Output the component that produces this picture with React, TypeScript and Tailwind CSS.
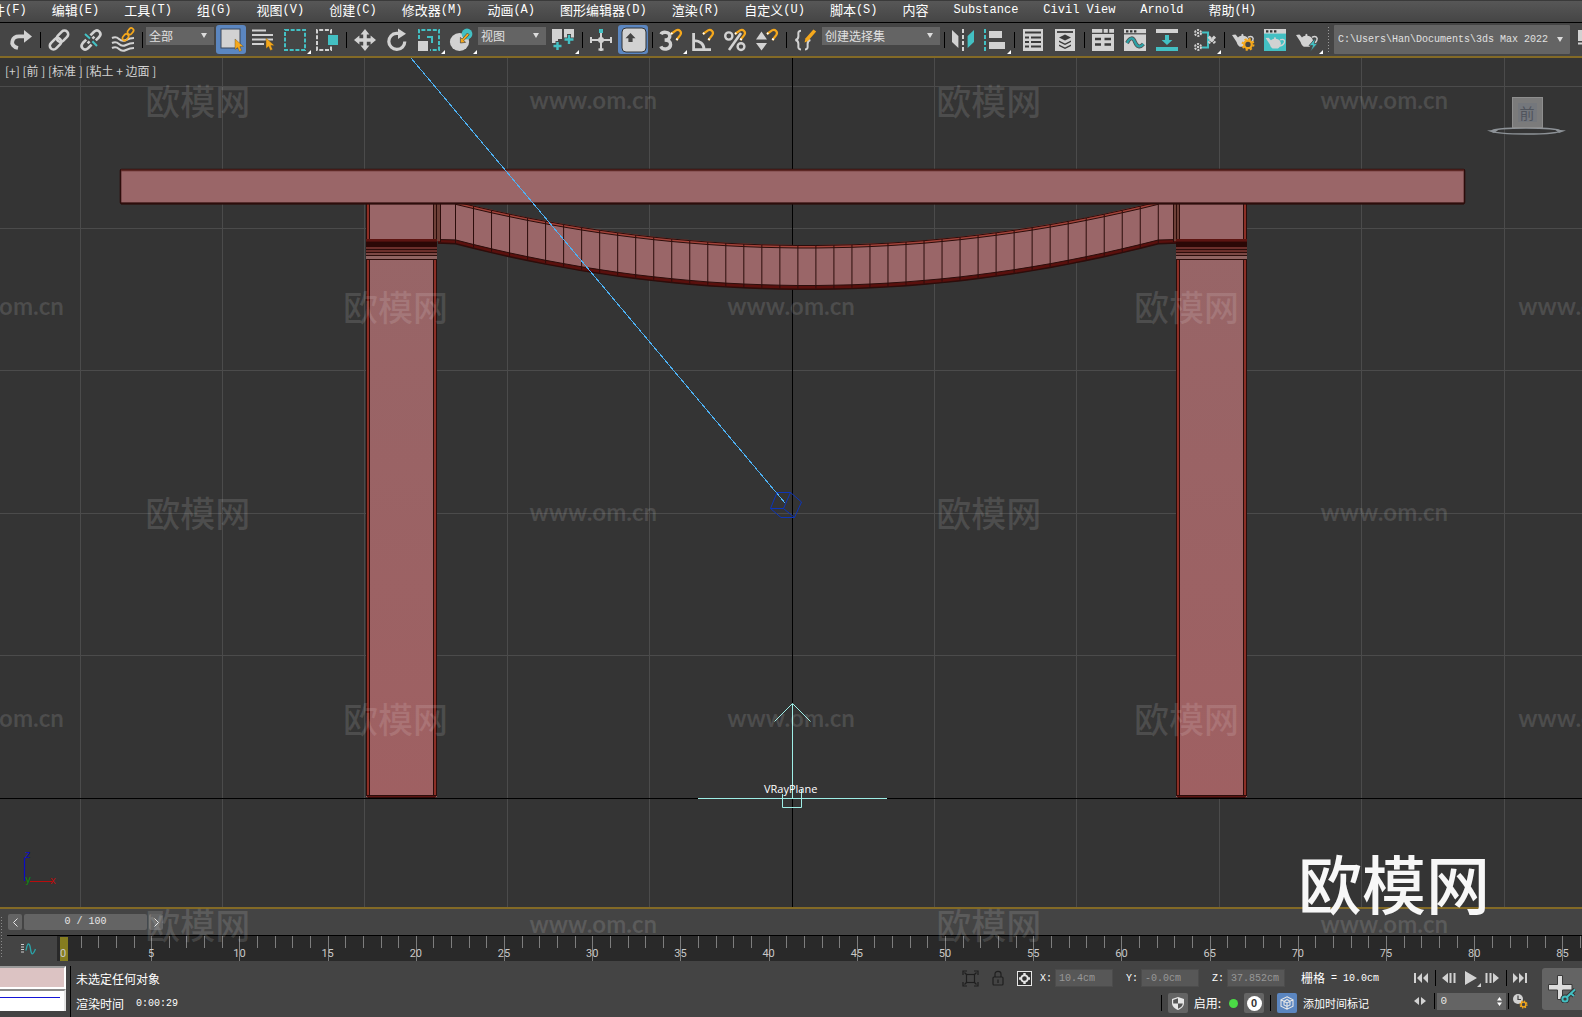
import type { ReactNode } from "react";

const LIGHT = "#d2d2d2";
const TEAL = "#43c0c3";
const AMBER = "#f5a81c";

const menus = [
  { label: "文件", latin: "(F)" },
  { label: "编辑", latin: "(E)" },
  { label: "工具", latin: "(T)" },
  { label: "组", latin: "(G)" },
  { label: "视图", latin: "(V)" },
  { label: "创建", latin: "(C)" },
  { label: "修改器", latin: "(M)" },
  { label: "动画", latin: "(A)" },
  { label: "图形编辑器", latin: "(D)" },
  { label: "渲染", latin: "(R)" },
  { label: "自定义", latin: "(U)" },
  { label: "脚本", latin: "(S)" },
  { label: "内容", latin: "" },
  { label: "", latin: "Substance" },
  { label: "", latin: "Civil View" },
  { label: "", latin: "Arnold" },
  { label: "帮助", latin: "(H)" },
];

function MenuBar() {
  return (
    <nav className="flex h-[22px] shrink-0 items-center gap-[25px] overflow-hidden border-t border-[#3a3a3a] bg-linear-to-b from-[#575757] to-[#454545] pb-[3px] whitespace-nowrap">
      {menus.map((menu, i) => (
        <a
          key={menu.label + menu.latin}
          href="#"
          className={`flex shrink-0 items-center text-[13px] leading-[18px] text-white ${i === 0 ? "-ml-[21px]" : ""}`}
        >
          {menu.label}
          <span className="font-['Liberation_Mono',monospace] text-[12px]">
            {menu.latin}
          </span>
        </a>
      ))}
    </nav>
  );
}

function Icon({ children }: { children: ReactNode }) {
  return (
    <svg
      viewBox="0 0 22 22"
      className="h-[22px] w-[22px] overflow-visible"
      fill="none"
      aria-hidden="true"
    >
      {children}
    </svg>
  );
}

type ToolProps = {
  name: string;
  active?: boolean;
  flyout?: boolean;
  children: ReactNode;
};

function Tool({ name, active, flyout, children }: ToolProps) {
  return (
    <button
      type="button"
      aria-label={name}
      title={name}
      className="relative flex h-[33px] w-8 shrink-0 items-center justify-center"
    >
      <span
        className={`flex h-[29px] w-[30px] items-center justify-center rounded-[3px] ${active ? "bg-[#5b86c0]" : ""}`}
      >
        <Icon>{children}</Icon>
      </span>
      {flyout && (
        <svg
          viewBox="0 0 4 4"
          className="absolute right-0 bottom-[2px] h-1 w-1"
          aria-hidden="true"
        >
          <path d="M4 0V4H0z" fill="#fff" />
        </svg>
      )}
    </button>
  );
}

function Divider() {
  return (
    <span className="flex w-[6px] shrink-0 justify-center">
      <span className="h-4 w-px bg-black" />
    </span>
  );
}

function Dropdown({
  name,
  value,
  box,
}: {
  name: string;
  value: string;
  box: string;
}) {
  return (
    <label className={`relative mx-px mb-[7px] block shrink-0 ${box}`}>
      <span className="sr-only">{name}</span>
      <select className="block h-[18px] w-full appearance-none bg-[#646464] pl-[3px] text-[12px] leading-[18px] text-[#e0e0e0]">
        <option>{value}</option>
      </select>
      <svg
        viewBox="0 0 6 5"
        className="pointer-events-none absolute top-[6px] right-[7px] h-[5px] w-[6px]"
        aria-hidden="true"
      >
        <path d="M0 0H6L3 5z" fill="#dcdcdc" />
      </svg>
    </label>
  );
}

function Magnet({ x, y }: { x: number; y: number }) {
  return (
    <g transform={`translate(${x} ${y})`}>
      <path
        d="M0 4 L5 0.4 C8 -1.2 11.5 2 9.2 5.2 L5.4 10"
        stroke={AMBER}
        strokeWidth="2.2"
      />
      <path d="M0 4 l1.4 -1 M6.6 8.6 l-1.2 1.4" stroke="#fff" strokeWidth="2" />
    </g>
  );
}

function Cursor({ x, y }: { x: number; y: number }) {
  return (
    <path
      transform={`translate(${x} ${y})`}
      d="M0 0 V10.5 L2.6 8.4 L4.4 12.4 L6.6 11.4 L4.9 7.6 L8.4 7.4 Z"
      fill={AMBER}
      stroke="#5a4a20"
      strokeWidth="0.4"
    />
  );
}

function Teapot() {
  return (
    <>
      <path
        d="M0 6 L3.4 5.6 C4.6 6.8 5.2 7.6 6 8.6 C7 7.4 8 7 9.4 6.8 V5.6 L10.4 4.8 L11.4 5.6 V6.8 C14.6 7 16.6 9 17 11.6 C17.2 14.4 15.4 16.4 13.6 17.8 H7.8 C6 16.6 5.2 15 4.6 13 Z"
        fill={LIGHT}
      />
      <path
        d="M16 8.2 C20 6.4 22 8.6 20.8 11.4 C20 13.4 18 14.6 15.6 15"
        stroke={LIGHT}
        strokeWidth="1.5"
      />
    </>
  );
}

function Gear({ cx, cy, r }: { cx: number; cy: number; r: number }) {
  return (
    <g stroke={AMBER}>
      <circle cx={cx} cy={cy} r={r} strokeWidth={r * 0.6} fill="#454545" />
      <circle
        cx={cx}
        cy={cy}
        r={r * 1.45}
        strokeWidth={r * 0.5}
        strokeDasharray={`${r * 0.57} ${r * 0.57}`}
      />
    </g>
  );
}

function Toolbar() {
  return (
    <div className="flex h-[34px] shrink-0 items-center overflow-hidden border-t border-black bg-[#454545] pl-[5px]">
      <Tool name="重做">
        <path
          d="M8 19 C3.4 18 1.4 15 2.4 12 C3.4 8.6 6 7.4 9 7.4 H15"
          stroke={LIGHT}
          strokeWidth="3.8"
        />
        <path d="M14 1 L22 7.4 L14 13.8z" fill={LIGHT} />
      </Tool>
      <Divider />
      <Tool name="选择并链接">
        <g stroke={LIGHT} strokeWidth="2.6">
          <rect x="8" y="3.6" width="13" height="7.4" rx="3.7" transform="rotate(-45 14.5 7.3)" />
          <rect x="1" y="11" width="13" height="7.4" rx="3.7" transform="rotate(-45 7.5 14.7)" />
        </g>
      </Tool>
      <Tool name="取消链接选择">
        <g stroke={LIGHT} strokeWidth="2.6">
          <path d="M10.4 6.4 L14 2.8 C18 -0.6 22.6 4 19.2 8 L15.8 11.4" />
          <path d="M6.2 10.6 L2.8 14 C-0.6 18 4 22.6 8 19.2 L11.6 15.6" />
          <path d="M7.6 14.4 L9.6 12.4 M12.4 9.6 L14.4 7.6" />
        </g>
        <path d="M5 5 L10 9.6 M12.4 12.2 L17 17" stroke={TEAL} strokeWidth="2" />
      </Tool>
      <Tool name="绑定到空间扭曲">
        <path
          d="M0 9 Q4 7 7 10 T14 11 T22 9 M0 14 Q4 12 7 15 T14 16 T22 14 M0 19 Q4 17 7 20 T14 21 T22 19"
          stroke={LIGHT}
          strokeWidth="2"
        />
        <g stroke={AMBER} strokeWidth="1.7">
          <rect x="15" y="0" width="7" height="4.6" rx="2.3" transform="rotate(-50 18.5 2.3)" />
          <rect x="10" y="6" width="7" height="4.6" rx="2.3" transform="rotate(-50 13.5 8.3)" />
        </g>
      </Tool>
      <Divider />
      <Dropdown name="选择过滤器" value="全部" box="w-[68px]" />
      <Tool name="选择对象" active>
        <rect x="1" y="0" width="19" height="19" fill={LIGHT} stroke="#3a4658" />
        <Cursor x={15} y={10} />
      </Tool>
      <Tool name="按名称选择">
        <path d="M0 1.5H14 M0 6H21 M0 10.5H21 M0 15H12" stroke={LIGHT} strokeWidth="2.2" />
        <Cursor x={14} y={9} />
      </Tool>
      <Tool name="矩形选择区域" flyout>
        <rect x="1" y="1" width="20" height="20" stroke={TEAL} strokeWidth="2" strokeDasharray="4 1.7" />
      </Tool>
      <Tool name="窗口/交叉">
        <path
          d="M15 4.6V1H1V21H15V17.4"
          stroke={LIGHT}
          strokeWidth="2"
          strokeDasharray="4 1.7"
        />
        <rect x="12" y="6" width="10" height="10" fill={TEAL} />
      </Tool>
      <Divider />
      <Tool name="选择并移动">
        <path
          d="M11 0 L15.4 5.4 H12.8 V9.2 H16.6 V6.6 L22 11 L16.6 15.4 V12.8 H12.8 V16.6 H15.4 L11 22 L6.6 16.6 H9.2 V12.8 H5.4 V15.4 L0 11 L5.4 6.6 V9.2 H9.2 V5.4 H6.6 Z"
          fill={LIGHT}
        />
      </Tool>
      <Tool name="选择并旋转">
        <path d="M13 4.4 H10.4 A8 8 0 1 0 18.8 12.4" stroke={LIGHT} strokeWidth="3.2" />
        <path d="M12 -0.6 L20 4.8 L12 10z" fill={LIGHT} />
      </Tool>
      <Tool name="选择并均匀缩放" flyout>
        <path d="M1 10V1H21V21H12" stroke={TEAL} strokeWidth="2" strokeDasharray="4 1.7" />
        <path d="M9 8H14V14" stroke={TEAL} strokeWidth="2" />
        <rect x="0" y="12" width="10" height="10" fill={LIGHT} />
      </Tool>
      <Tool name="选择并放置" flyout>
        <ellipse cx="9.5" cy="13" rx="9.6" ry="9" fill={LIGHT} />
        <circle cx="17" cy="5" r="5.4" fill={TEAL} />
        <path d="M10.4 14 V8.4 L12.2 10 L17.4 4 L19.2 5.8 L13.8 11.6 L15.6 13.4 Z" fill={AMBER} stroke="#454545" strokeWidth="0.7" />
      </Tool>
      <Dropdown name="参考坐标系" value="视图" box="w-[68px]" />
      <Tool name="使用轴点中心" flyout>
        <path d="M0 0H10V10H6V14H0z M12 0H22V10H12z" fill={LIGHT} />
        <path d="M5.5 12V22M1 17H10 M17 5V16M12 10.5H22" stroke="#454545" strokeWidth="4" />
        <path d="M5.5 13V21M1.5 17H9.5 M17 6V15M12.5 10.5H21.5" stroke={TEAL} strokeWidth="2.4" />
      </Tool>
      <Divider />
      <Tool name="选择并操纵">
        <path d="M1 11H21M11 4V22M1 8V14M21 8V14" stroke={LIGHT} strokeWidth="2" />
        <circle cx="11" cy="11" r="3" fill={LIGHT} />
        <path d="M8.5 20.5H13.5" stroke={LIGHT} strokeWidth="2.4" />
        <rect x="9" y="0" width="4" height="4" fill={TEAL} />
      </Tool>
      <Tool name="键盘快捷键覆盖切换" active>
        <rect x="0" y="-1" width="24" height="24" rx="4" fill={LIGHT} stroke="#333" />
        <path d="M8.5 4 L13.5 9.2 H10.6 V13 H6.4 V9.2 H3.5 Z" fill="#454545" />
      </Tool>
      <Divider />
      <Tool name="捕捉开关" flyout>
        <path
          d="M1 5.2 C2.4 2.6 9.6 2.2 9.8 7 C9.8 9.6 7.8 11 4.6 11 C8.6 11 10.8 12.8 10.6 15.6 C10.4 20.8 2.4 21.4 0.8 17.4"
          stroke={LIGHT}
          strokeWidth="3.4"
        />
        <Magnet x={11} y={1} />
      </Tool>
      <Tool name="角度捕捉切换">
        <path d="M1.6 4V20.6H19 M2 11.6 C7.6 11.4 12 15 12 20" stroke={LIGHT} strokeWidth="2.8" />
        <Magnet x={11} y={1} />
      </Tool>
      <Tool name="百分比捕捉切换">
        <circle cx="4.8" cy="7" r="3.6" stroke={LIGHT} strokeWidth="2.4" />
        <circle cx="17" cy="17.6" r="3.4" stroke={LIGHT} strokeWidth="2.4" />
        <path d="M17 4 L5 21" stroke={LIGHT} strokeWidth="2.6" />
        <Magnet x={11} y={1} />
      </Tool>
      <Tool name="微调器捕捉切换">
        <path d="M0 10.4L5.5 2.6L11 10.4z M0 14H11L5.5 21.6z" fill={LIGHT} />
        <Magnet x={11} y={1} />
      </Tool>
      <Divider />
      <Tool name="编辑命名选择集">
        <path
          d="M7 1.8C3.6 1.8 4.4 4.4 4.4 7 S3.6 10.6 1.4 11 C3.6 11.4 4.4 12.6 4.4 15 S3.6 20.4 7 20.4 M11 20.4C14.4 20.4 13.6 17.6 13.6 15 S14.4 11.4 16.4 11"
          stroke={LIGHT}
          strokeWidth="2"
        />
        <path d="M10.6 13.4 L11.4 9.6 L19.4 0.4 L22.2 2.6 L14 12 Z" fill={AMBER} />
      </Tool>
      <Dropdown name="命名选择集" value="创建选择集" box="w-[118px]" />
      <Divider />
      <Tool name="镜像">
        <path d="M0 1L6.4 7V19L0 13z" fill={LIGHT} />
        <path d="M22 1L15.6 7V19L22 13z" fill={TEAL} />
        <path d="M11 0V22" stroke={LIGHT} strokeWidth="2" strokeDasharray="4 2" />
      </Tool>
      <Tool name="对齐" flyout>
        <path d="M1 0V22" stroke={TEAL} strokeWidth="2" strokeDasharray="4 2" />
        <path d="M5 2H18V9H5z M5 13H21V20H5z" fill={LIGHT} />
      </Tool>
      <Divider />
      <Tool name="切换场景资源管理器">
        <path d="M1 0H21V22H1z" fill={LIGHT} />
        <path d="M3 3.5H19 M3 8.5H7M9 8.5H19 M3 13H7M9 13H19 M3 17.5H7M9 17.5H19" stroke="#3a3a3a" strokeWidth="2.2" />
      </Tool>
      <Tool name="切换层资源管理器">
        <path d="M1 0H21V22H1z" fill={LIGHT} />
        <path d="M3 3H19" stroke="#3a3a3a" strokeWidth="1.8" />
        <path d="M11 5.6L17 8.6L11 11.6L5 8.6z M5 11.6L11 14.4L17 11.6V13L11 16L5 13z M5 15.6L11 18.4L17 15.6V17L11 20L5 17z" fill="#3a3a3a" />
      </Tool>
      <Divider />
      <Tool name="显示功能区">
        <path d="M0 0H22V22H0z" fill={LIGHT} />
        <path d="M0 4.4H22M11 0V4M16.5 0V4" stroke="#454545" strokeWidth="1.4" />
        <path d="M3 10H9M12.5 10H19 M3 15.5H9M12.5 15.5H19" stroke="#3a3a3a" strokeWidth="2.6" />
      </Tool>
      <Tool name="曲线编辑器">
        <path d="M0 0H22V22H0z" fill={LIGHT} />
        <path d="M0 4.8H22" stroke="#454545" strokeWidth="1.2" />
        <path d="M2 2.4H4.4M6 2.4H8.4M10 2.4H12.4" stroke="#333" strokeWidth="2.2" />
        <path d="M3 14C6 8 9 8 11 13S16 19 19.4 15" stroke="#555" strokeWidth="4" />
        <path d="M3 14C6 8 9 8 11 13S16 19 19.4 15" stroke="#2ba3a8" strokeWidth="2.2" />
      </Tool>
      <Tool name="图解视图">
        <path d="M0 0H22V4H0z" fill={LIGHT} />
        <path d="M0 18H22V22H0z M9 6H13V11H16.4L11 16L5.6 11H9z" fill={TEAL} />
      </Tool>
      <Divider />
      <Tool name="材质编辑器" flyout>
        <path d="M8 3.5H14V18.5H8 M14 11H16" stroke={TEAL} strokeWidth="2" />
        <g stroke={LIGHT} strokeWidth="2" strokeDasharray="2 1.2">
          <circle cx="4" cy="4" r="3" />
          <circle cx="4" cy="18" r="3" />
        </g>
        <circle cx="4" cy="4" r="1.2" fill={LIGHT} />
        <circle cx="4" cy="18" r="1.2" fill={LIGHT} />
        <path d="M14.6 7.6L21 14M21 7.6L14.6 14" stroke={LIGHT} strokeWidth="3" strokeDasharray="3 0.6" />
      </Tool>
      <Divider />
      <Tool name="渲染设置">
        <Teapot />
        <Gear cx={16} cy={15.4} r={3.8} />
      </Tool>
      <Tool name="渲染帧窗口">
        <path d="M0 0H22V22H0z" fill={TEAL} />
        <path d="M0 0H22V4.6H0z" fill={LIGHT} />
        <path d="M2 2.4H4.4M6 2.4H8.4M10 2.4H12.4" stroke="#333" strokeWidth="2.2" />
        <g transform="translate(1.6 3.6) scale(0.9)">
          <Teapot />
        </g>
      </Tool>
      <Tool name="渲染产品" flyout>
        <Teapot />
        <path d="M19.5 9L13 16.6H16.6L14.4 22.4L21.6 14.6H18.2z" fill={TEAL} stroke="#454545" strokeWidth="0.8" />
      </Tool>
      <span className="mx-1 h-[27px] w-[3px] shrink-0 bg-[radial-gradient(circle,#9a9a9a_1px,transparent_1px)] bg-[length:3px_3px]" />
      <label className="relative mr-1 block w-[236px] shrink-0">
        <span className="sr-only">项目文件夹</span>
        <select className="block h-[29px] w-full appearance-none rounded-[1px] bg-[#646464] pl-1 font-['Liberation_Mono',monospace] text-[10px] text-[#e0e0e0]">
          <option>C:\Users\Han\Documents\3ds Max 2022</option>
        </select>
        <svg
          viewBox="0 0 6 5"
          className="pointer-events-none absolute top-[12px] right-[7px] h-[5px] w-[6px]"
          aria-hidden="true"
        >
          <path d="M0 0H6L3 5z" fill="#dcdcdc" />
        </svg>
      </label>
      <Tool name="项目工具栏">
        <path d="M-1 1H3V12H-1z" fill={LIGHT} />
        <path d="M-1 14.5H6" stroke={LIGHT} strokeWidth="2" />
      </Tool>
    </div>
  );
}

/* ---------- viewport ---------- */

const AXIS_X = 792.5;
const FLOOR_Y = 798.5;
const gridXs = [-5, -4, -3, -2, -1, 1, 2, 3, 4, 5].map(
  (n) => Math.floor(792 + n * 142.4) + 0.5,
);
const gridYs = [1, 2, 3, 4, 5].map((n) => Math.floor(798 - n * 142.4) + 0.5);

const beamXs = Array.from({ length: 40 }, (_, i) => 455.5 + i * 18.02);
const beamTop = (x: number) => 245.5 - 0.000354 * (x - 807) ** 2;
const beamBottom = (x: number) => 287.5 - 0.000369 * (x - 807) ** 2;

const trace = (fn: (x: number) => number, shift = 0) =>
  beamXs.map((x) => `${x.toFixed(1)},${(fn(x) + shift).toFixed(1)}`).join(" ");

const beamFill = [
  "438,200",
  trace(beamTop),
  "1177,200 1177,241",
  beamXs
    .map((x) => `${x.toFixed(1)},${beamBottom(x).toFixed(1)}`)
    .reverse()
    .join(" "),
  "438,241",
].join(" ");

function Leg({ x, outer }: { x: number; outer: "left" | "right" }) {
  const inner = outer === "left" ? x + 67.5 : x;
  return (
    <g>
      <rect x={x} y="203" width="71" height="594" rx="2" fill="#9a6668" />
      <rect x={x} y="247" width="71" height="550" fill="url(#leg)" />
      <path d={`M${x + 2} 204V796M${x + 69} 204V796`} stroke="#8c2f26" strokeWidth="2.4" />
      <rect x={inner} y="204" width="3.5" height="36" fill="#6e4038" />
      <path
        d={`M${x + 0.5} 204V796M${x + 3.5} 204V796M${x + 67.5} 204V796M${x + 70.5} 204V796`}
        stroke="#2c0d0b"
      />
      <rect x={x} y="247" width="71" height="5" fill="#6b2f2b" />
      <rect x={x} y="252" width="71" height="4" fill="#7c4844" />
      <rect x={x} y="256" width="71" height="3.5" fill="#8f6361" />
      <rect x={x} y="239" width="71" height="8" fill="#2b0806" />
      <rect x={x} y="239" width="71" height="2.6" fill="#5c1411" />
      <path
        d={`M${x} 249.5h71M${x} 252.5h71M${x} 255.5h71M${x} 259.5h71`}
        stroke="#2c0d0b"
      />
      <rect x={x + 1} y="795" width="69" height="2.5" fill="#5c1411" />
      <path d={`M${x} 795.5h71M${x + 2} 797.5h67`} stroke="#2c0d0b" />
    </g>
  );
}

function Scene() {
  return (
    <svg
      viewBox="0 58 1582 849"
      preserveAspectRatio="xMidYMid slice"
      className="block h-full w-full"
      fill="none"
      role="img"
      aria-label="前视图"
    >
      <defs>
        <linearGradient id="leg" x1="0" y1="0" x2="0" y2="1">
          <stop offset="0" stopColor="#976567" />
          <stop offset="1" stopColor="#9f6062" />
        </linearGradient>
      </defs>
      <g stroke="#4b4b4b">
        {gridXs.map((x) => (
          <path key={x} d={`M${x} 58V907`} />
        ))}
        {gridYs.map((y) => (
          <path key={y} d={`M0 ${y}H1582`} />
        ))}
      </g>
      <path d={`M${AXIS_X} 58V907M0 ${FLOOR_Y}H1582`} stroke="#000" />

      <polygon points={beamFill} fill="#9a6668" />
      <polyline points={trace(beamTop, 1)} stroke="#a34239" strokeWidth="3" />
      <polyline points={trace(beamTop)} stroke="#2c0d0b" />
      <polyline points={trace(beamTop, 2.5)} stroke="#2c0d0b" />
      <polyline points={`438,241.5 ${trace(beamBottom)} 1177,241.5`} stroke="#5a100d" strokeWidth="4" />
      <polyline points={`438,239.5 ${trace(beamBottom, -2)} 1177,239.5`} stroke="#2c0d0b" />
      <polyline points={`438,243 ${trace(beamBottom, 1.8)} 1177,243`} stroke="#2c0d0b" strokeWidth="1.4" />
      {beamXs.map((x) => (
        <path
          key={x}
          d={`M${x} ${Math.max(beamTop(x), 200)}V${beamBottom(x) + 1}`}
          stroke="#2c0d0b"
        />
      ))}
      <path d="M437 204h3v37h-3z M1173 204h3v37h-3z" fill="#6e4038" />
      <path d="M440.5 204v38M1173.5 204v38" stroke="#2c0d0b" />

      <Leg x={366} outer="left" />
      <Leg x={1176} outer="right" />

      <rect x="120.5" y="169.5" width="1344" height="34" rx="1" fill="#9a6668" stroke="#2c0d0b" strokeWidth="1.6" />
      <path d="M121 170.4H1464" stroke="#5e2825" strokeWidth="1.6" />
      <path d="M121 203.5H1464" stroke="#2c0d0b" strokeWidth="2" />

      <path d="M411 58L785 503" stroke="#4db2f5" shapeRendering="crispEdges" />
      <path
        d="M777 492.5H790.5L801.5 502L794.5 517.5H781L770.5 508.5H783.5L790.5 492.5M777 492.5L770.5 508.5M783.5 508.5L794.5 517.5"
        stroke="#0d35b8"
      />
      <g stroke="#9eeee6">
        <path d="M698 798.5H887M792.5 704V798M774.5 721.5L792.5 703.5L810.5 721.5" />
        <path d="M782.5 794V807.5H801.5V789" />
      </g>
      <text x="764" y="793" fill="#fff" className="font-['Open_Sans',sans-serif] text-[11px]">
        VRayPlane
      </text>

      {/* world axis tripod */}
      <path d="M24.5 881V857.5" stroke="#0b0bc4" strokeWidth="1.2" />
      <path d="M30 881.5H52" stroke="#b80d0d" />
      <g className="font-['DejaVu_Sans',sans-serif] text-[10px]">
        <text x="25" y="858" fill="#0b0bc4">z</text>
        <text x="25" y="883" fill="#0f8a0f">y</text>
        <text x="50" y="884" fill="#b80d0d">x</text>
      </g>
    </svg>
  );
}

function ViewCube() {
  return (
    <div className="absolute top-[39px] right-[15px] flex h-9 w-20 justify-center">
      <svg viewBox="0 0 80 12" className="absolute -bottom-1 left-0 h-3 w-20" fill="none" aria-hidden="true">
        <ellipse cx="39" cy="6" rx="34" ry="3" stroke="#8d9297" strokeWidth="1.4" />
        <path d="M0 5.5L12 4.6L7 8z M79 5.5L68 4.6L72 8z" fill="#8d9297" />
      </svg>
      <button
        type="button"
        className="relative flex h-[31px] w-[31px] items-center justify-center border border-[#8e8e8e] bg-[#7b7b7b]"
      >
        <span className="flex h-[19px] w-[19px] items-center justify-center bg-[#74777c] text-[15px] leading-none text-[#50545c]">
          前
        </span>
      </button>
    </div>
  );
}

function Viewport() {
  return (
    <main className="relative min-h-0 flex-1 border-y-2 border-[#836a26] bg-[#343434]">
      <Scene />
      <p className="absolute top-[5px] left-[5px] text-[12px] leading-4 text-[#d0d0d0]">
        [+] [前 ] [标准 ] [粘土 + 边面 ]
      </p>
      <ViewCube />
    </main>
  );
}

/* ---------- time line ---------- */

const frames = Array.from({ length: 86 }, (_, i) => i);

function TrackBar() {
  return (
    <div className="flex shrink-0 bg-[#444444]">
      <span className="mt-[7px] mb-[3px] w-[3px] shrink-0 bg-[radial-gradient(circle,#8a8a8a_1px,transparent_1px)] bg-[length:3px_3px]" />
      <div className="ml-1 flex min-w-0 flex-1 flex-col">
        <div className="flex h-[26px] items-center gap-[2px] pl-px text-[12px] text-[#e6e6e6]">
          <button type="button" aria-label="上一帧" className="flex h-4 w-[14px] items-center justify-center rounded-[2px] bg-[#646464]">
            <svg viewBox="0 0 5 9" className="h-[9px] w-[5px]" fill="none" stroke="#e6e6e6">
              <path d="M4.5 0.5L0.5 4.5L4.5 8.5" />
            </svg>
          </button>
          <button type="button" className="h-4 w-[123px] rounded-[2px] bg-[#646464] font-['Liberation_Mono',monospace] text-[10px] leading-4">
            0 / 100
          </button>
          <button type="button" aria-label="下一帧" className="flex h-4 w-[14px] items-center justify-center rounded-[2px] bg-[#646464]">
            <svg viewBox="0 0 5 9" className="h-[9px] w-[5px]" fill="none" stroke="#e6e6e6">
              <path d="M0.5 0.5L4.5 4.5L0.5 8.5" />
            </svg>
          </button>
        </div>
        <div className="flex h-[26px] border-t border-black">
          <button type="button" aria-label="打开迷你曲线编辑器" className="flex w-[50px] shrink-0 items-center justify-center pr-2">
            <svg viewBox="0 0 15 12" className="h-3 w-[15px]" fill="none">
              <path d="M0 1.5H3M0 4H3M0 6.5H3M0 9H3" stroke="#cfcfcf" />
              <path d="M5 7.5C6.5 -1 8.5 -1 9.5 6S12 12 14.5 6" stroke="#2ba3a8" strokeWidth="1.4" />
            </svg>
          </button>
          <div className="relative flex min-w-0 flex-1 overflow-hidden bg-[#292929] pl-[6px]">
            <span className="absolute top-px left-[3px] h-6 w-2 bg-[#857d20]" />
            {frames.map((frame) => (
              <div key={frame} className="relative min-w-0 flex-1">
                {frame > 0 && (
                  <span
                    className={`absolute top-0 left-0 w-px bg-[#7d7d7d] ${frame % 5 === 0 ? "h-[26px]" : "h-3"}`}
                  />
                )}
                {frame % 5 === 0 && (
                  <span className="absolute top-3 -left-2 w-4 text-center font-['Roboto',sans-serif] text-[11px] leading-3 text-[#c8c8c8]">
                    {frame}
                  </span>
                )}
              </div>
            ))}
            <span className="h-3 w-[2px] shrink-0 border-l border-[#7d7d7d]" />
          </div>
        </div>
      </div>
    </div>
  );
}

/* ---------- status bar ---------- */

function Coord({ axis, value }: { axis: string; value: string }) {
  return (
    <label className="flex items-center gap-[3px] font-['Liberation_Mono',monospace] text-[10px] text-white">
      <span className="w-3">{axis}:</span>
      <input
        defaultValue={value}
        className="h-[18px] w-[58px] border border-[#4c4c4c] bg-[#575757] px-[3px] text-[10px] text-[#979797]"
      />
    </label>
  );
}

function PlayButton({ name, children }: { name: string; children: ReactNode }) {
  return (
    <button type="button" aria-label={name} className="shrink-0">
      <svg viewBox="0 0 15 12" className="h-3 w-[15px] overflow-visible" fill={LIGHT}>
        {children}
      </svg>
    </button>
  );
}

function StatusBar() {
  return (
    <footer className="flex h-14 shrink-0 overflow-hidden bg-[#444444] pt-[5px] text-[12px] whitespace-nowrap text-white">
      <div className="flex w-[66px] shrink-0 flex-col">
        <input
          aria-label="宏录制器"
          className="h-[23px] w-full border-t-2 border-r-2 border-b-2 border-t-[#9a9a9a] border-r-white border-b-white bg-[#dcc3c3]"
        />
        <div className="h-[22px] border-t-2 border-r-2 border-t-[#8a8a8a] border-r-[#e4e4e4] bg-white pt-[6px]">
          <div className="h-px w-[60px] bg-[#1414d8]" />
        </div>
      </div>
      <span className="mx-1 w-px shrink-0 bg-black" />
      <div className="flex flex-1 flex-col gap-[7px] pt-1 pl-px leading-[18px]">
        <p>未选定任何对象</p>
        <p className="flex items-center gap-3">
          渲染时间
          <span className="font-['Liberation_Mono',monospace] text-[10px]">0:00:29</span>
        </p>
      </div>

      <div className="flex w-[416px] shrink-0 flex-col gap-[5px] pt-[2px]">
        <div className="flex h-5 items-center pl-px">
          <button type="button" aria-label="孤立当前选择" className="mr-[13px]">
            <svg viewBox="0 0 17 17" className="h-[17px] w-[17px]" fill="none" stroke="#1f1f1f" strokeWidth="1.2">
              <path d="M1 5V1H5M12 1H16V5M16 12V16H12M5 16H1V12" />
              <rect x="4.5" y="4.5" width="8" height="8" />
              <path d="M2.5 2.5L5 5M14.5 2.5L12 5M2.5 14.5L5 12M14.5 14.5L12 12" />
            </svg>
          </button>
          <button type="button" aria-label="选择锁定切换" className="mr-[13px]">
            <svg viewBox="0 0 12 16" className="h-4 w-3" fill="none" stroke="#1f1f1f" strokeWidth="1.2">
              <rect x="1" y="7" width="10" height="8" rx="1" />
              <path d="M3 7V4C3 0.4 9 0.4 9 4V7M6 9.5V13" />
            </svg>
          </button>
          <button type="button" aria-label="绝对/偏移模式变换输入" className="mr-[8px]">
            <svg viewBox="0 0 15 15" className="h-[15px] w-[15px]" fill="none">
              <rect x="0.5" y="0.5" width="14" height="14" fill="#333" stroke="#e6e6e6" />
              <circle cx="7.5" cy="7.5" r="3.2" stroke="#e6e6e6" strokeWidth="1.8" />
              <path d="M7.5 2V5M7.5 10V13M2 7.5H5M10 7.5H13" stroke="#e6e6e6" strokeWidth="2.4" />
            </svg>
          </button>
          <div className="flex gap-[13px]">
            <Coord axis="X" value="10.4cm" />
            <Coord axis="Y" value="-0.0cm" />
            <Coord axis="Z" value="37.852cm" />
          </div>
          <p className="ml-4 flex items-center gap-[6px]">
            栅格
            <span className="font-['Liberation_Mono',monospace] text-[10px]">= 10.0cm</span>
          </p>
        </div>
        <div className="flex h-5 items-center justify-end pr-2">
          <span className="mr-[6px] h-4 w-px bg-black" />
          <button type="button" aria-label="自适应降级" className="flex h-5 w-5 items-center justify-center rounded-[2px] bg-[#646464]">
            <svg viewBox="0 0 12 13" className="h-[13px] w-3">
              <path d="M0 2L6 0L12 2V6C12 9.5 9.5 11.5 6 13C2.5 11.5 0 9.5 0 6z" fill="#e6e6e6" />
              <path d="M6 1.2V6.5H1.2V3z M6 6.5H10.8C10.6 9 8.6 10.6 6 11.8z" fill="#555" />
            </svg>
          </button>
          <span className="mr-2 ml-[6px]">启用:</span>
          <span className="mr-[6px] h-[9px] w-[9px] rounded-full bg-[#4bdc46]" />
          <button type="button" className="flex h-5 w-5 items-center justify-center rounded-[2px] bg-[#646464]">
            <span className="h-[15px] w-[15px] rounded-full bg-white text-center font-['Liberation_Sans',sans-serif] text-[11px] leading-[15px] font-bold text-[#333]">
              0
            </span>
          </button>
          <span className="mx-[6px] h-4 w-px bg-black" />
          <button type="button" aria-label="时间标记" className="flex h-5 w-5 items-center justify-center rounded-[2px] bg-[#5b86c0]">
            <svg viewBox="0 0 14 14" className="h-[14px] w-[14px]" fill="none" stroke="#e6e6e6" strokeWidth="1.1">
              <path d="M7 0.8L13 3.8V10.2L7 13.2L1 10.2V3.8z M1 3.8L7 7L13 3.8M7 7V13M4 5.4L7 3.5L10 5.4V9L7 10.5L4 9z" />
            </svg>
          </button>
          <button type="button" className="ml-[6px] text-[11px]">
            添加时间标记
          </button>
        </div>
      </div>

      <div className="ml-[37px] flex w-[114px] shrink-0 flex-col gap-[3px] pt-[2px]">
        <div className="flex h-5 items-center justify-between">
          <PlayButton name="转至开头">
            <path d="M0 1H2V11H0z M8 1V11L3 6z M14 1V11L9 6z" />
          </PlayButton>
          <span className="h-4 w-px bg-black" />
          <PlayButton name="上一帧">
            <path d="M6 1V11L0 6z M7.5 1H9.5V11H7.5z M11.5 1H13.5V11H11.5z" />
          </PlayButton>
          <PlayButton name="播放动画">
            <path d="M2 -1L14 6L2 13z M18 11V15H14z" />
          </PlayButton>
          <PlayButton name="下一帧">
            <path d="M8 1V11L14 6z M0.5 1H2.5V11H0.5z M4.5 1H6.5V11H4.5z" />
          </PlayButton>
          <span className="h-4 w-px bg-black" />
          <PlayButton name="转至结尾">
            <path d="M12 1H14V11H12z M0 1V11L5 6z M6 1V11L11 6z" />
          </PlayButton>
        </div>
        <div className="flex h-5 items-center">
          <button type="button" aria-label="关键点模式切换" className="mr-2">
            <svg viewBox="0 0 12 8" className="h-2 w-3" fill={LIGHT}>
              <path d="M5 0V8L0 4z M7 0V8L12 4z" />
            </svg>
          </button>
          <span className="h-4 w-px bg-black" />
          <label className="relative mx-[2px] block">
            <span className="sr-only">当前帧</span>
            <input
              defaultValue="0"
              className="block h-[17px] w-[69px] bg-[#646464] px-1 font-['Liberation_Mono',monospace] text-[11px] text-[#e6e6e6]"
            />
            <svg viewBox="0 0 5 9" className="absolute top-1 right-[4px] h-[9px] w-[5px]" fill="#fff" aria-hidden="true">
              <path d="M0 3.5H5L2.5 0z M0 5.5H5L2.5 9z" />
            </svg>
          </label>
          <span className="h-4 w-px bg-black" />
          <button type="button" aria-label="时间配置" className="ml-[5px]">
            <svg viewBox="0 0 15 15" className="h-[15px] w-[15px] overflow-visible" fill="none">
              <circle cx="5" cy="5" r="5" fill={LIGHT} />
              <path d="M5 1.5V5.5H8" stroke="#444" strokeWidth="1.2" />
              <Gear cx={10.5} cy={10.5} r={2.4} />
            </svg>
          </button>
        </div>
      </div>
      <button type="button" aria-label="设置关键点" className="mt-[2px] -mr-1 ml-[14px] flex h-[42px] w-11 shrink-0 items-center justify-center rounded-[3px] bg-[#646464] pr-1">
        <svg viewBox="0 0 28 28" className="h-7 w-7" fill="none">
          <path d="M9.5 0.5H14.5V9.5H24V15H14.5V24.5H9.5V15H0.5V9.5H9.5z" fill="#dcdcdc" stroke="#3a3a3a" />
          <g stroke="#333" strokeWidth="4">
            <circle cx="17" cy="24" r="2.6" />
            <path d="M19 22L27 14.5M23 18.5L26 21" />
          </g>
          <g stroke={TEAL} strokeWidth="2">
            <circle cx="17" cy="24" r="2.6" />
            <path d="M19 22L27 14.5M23 18.5L26 21" />
          </g>
        </svg>
      </button>
    </footer>
  );
}

/* ---------- watermark ---------- */

const BrandMark = () => (
  <span className="pb-[7px] text-center text-[35px] leading-none font-medium">欧模网</span>
);
const SiteMark = () => (
  <span className="pb-[7px] text-center font-['Lato',sans-serif] text-[24px] leading-none font-bold">
    www.om.cn
  </span>
);

function Watermark() {
  return (
    <div className="pointer-events-none absolute inset-0 overflow-hidden text-white/12">
      {[0, 1, 2, 3, 4].map((row) =>
        row % 2 === 0 ? (
          <div key={row} className="grid h-[206px] grid-cols-4 items-center">
            <BrandMark />
            <SiteMark />
            <BrandMark />
            <SiteMark />
          </div>
        ) : (
          <div key={row} className="-mx-[12.5%] grid h-[206px] grid-cols-5 items-center">
            <SiteMark />
            <BrandMark />
            <SiteMark />
            <BrandMark />
            <SiteMark />
          </div>
        ),
      )}
      <p className="absolute right-[92px] bottom-[104px] text-[64px] leading-none font-medium text-[#f7f7f7]">
        欧模网
      </p>
    </div>
  );
}

export default function App() {
  return (
    <div className="relative flex h-screen flex-col overflow-hidden bg-[#444444] font-['Noto_Sans_CJK_SC',sans-serif]">
      <MenuBar />
      <Toolbar />
      <Viewport />
      <TrackBar />
      <StatusBar />
      <Watermark />
    </div>
  );
}
